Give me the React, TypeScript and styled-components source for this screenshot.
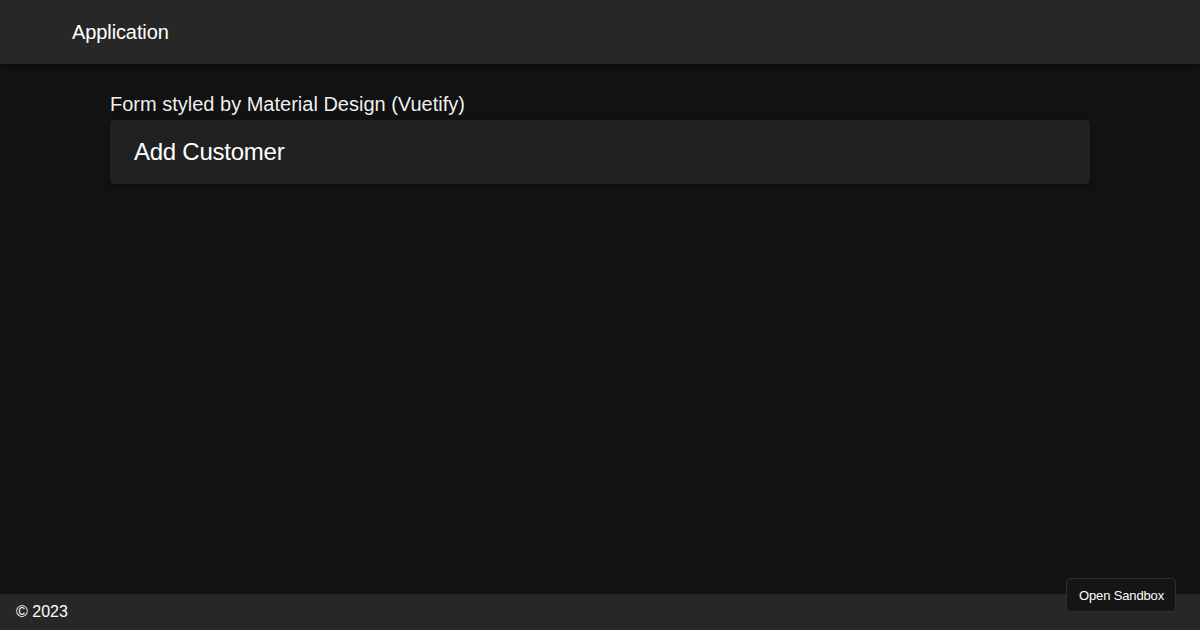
import React from 'react'
import styled, { createGlobalStyle } from 'styled-components'

const GlobalStyle = createGlobalStyle`
  html, body {
    margin: 0;
    padding: 0;
    background: #121212;
    font-family: "Liberation Sans", Arial, sans-serif;
    color: #ffffff;
  }
  #root {
    height: 100vh;
  }
`

const Layout = styled.div`
  display: flex;
  flex-direction: column;
  height: 100vh;
  background: #121212;
`

const AppBar = styled.header`
  height: 64px;
  flex-shrink: 0;
  display: flex;
  align-items: center;
  padding: 0 72px;
  background: #272727;
  box-shadow: 0 2px 4px -1px rgba(0, 0, 0, 0.2), 0 4px 5px 0 rgba(0, 0, 0, 0.14);
`

const AppTitle = styled.div`
  font-size: 20px;
  line-height: 1;
  letter-spacing: -0.1px;
`

const Main = styled.main`
  flex: 1;
  padding-top: 28px;
`

const Container = styled.div`
  width: 980px;
  margin: 0 auto;
`

const Label = styled.div`
  font-size: 20px;
  line-height: 24px;
  height: 28px;
  color: rgba(255, 255, 255, 0.95);
`

const Card = styled.div`
  height: 64px;
  display: flex;
  align-items: center;
  padding: 0 24px;
  background: #212121;
  border-radius: 4px;
  box-shadow: 0 3px 1px -2px rgba(0, 0, 0, 0.2), 0 2px 2px 0 rgba(0, 0, 0, 0.14),
    0 1px 5px 0 rgba(0, 0, 0, 0.12);
`

const CardTitle = styled.h2`
  margin: 0;
  font-size: 24px;
  font-weight: 400;
  line-height: 32px;
  letter-spacing: -0.25px;
`

const Footer = styled.footer`
  position: relative;
  height: 36px;
  flex-shrink: 0;
  display: flex;
  align-items: center;
  padding: 0 16px;
  background: #272727;
  font-size: 16px;
`

const SandboxButton = styled.button`
  position: absolute;
  right: 24px;
  bottom: 18px;
  height: 34px;
  padding: 0 11px 0 12px;
  background: #151515;
  border: 1px solid #2e2e2e;
  border-radius: 4px;
  color: #ffffff;
  font-family: "Liberation Sans", Arial, sans-serif;
  font-size: 13px;
  letter-spacing: -0.15px;
  cursor: pointer;
`

export default function App() {
  return (
    <>
      <GlobalStyle />
      <Layout>
        <AppBar>
          <AppTitle>Application</AppTitle>
        </AppBar>
        <Main>
          <Container>
            <Label>Form styled by Material Design (Vuetify)</Label>
            <Card>
              <CardTitle>Add Customer</CardTitle>
            </Card>
          </Container>
        </Main>
        <Footer>
          © 2023
          <SandboxButton>Open Sandbox</SandboxButton>
        </Footer>
      </Layout>
    </>
  )
}
